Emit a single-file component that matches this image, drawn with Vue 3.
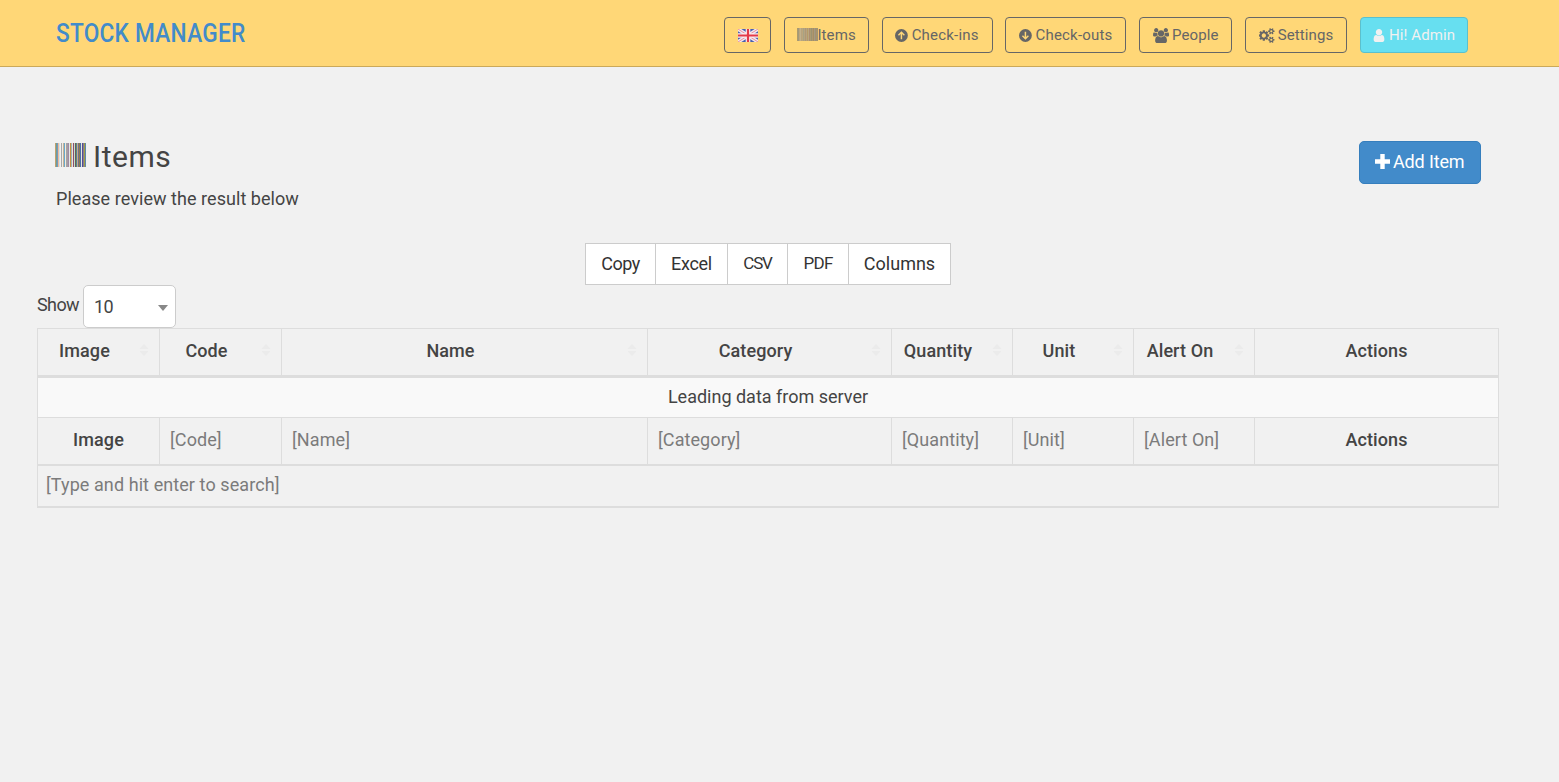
<template>
  <div class="page">
    <header class="navbar">
      <a class="brand">STOCK MANAGER</a>
      <nav class="nav-links">
        <button class="nav-btn flag-btn">
          <svg class="flag" viewBox="0 0 20 13">
            <rect width="20" height="13" fill="#4a60ac" />
            <path d="M0 0L20 13M20 0L0 13" stroke="#f3e8ee" stroke-width="3.6" />
            <path d="M0 0L20 13M20 0L0 13" stroke="#e8909c" stroke-width="1" />
            <path d="M10 0V13M0 6.5H20" stroke="#fbeef0" stroke-width="4.6" />
            <path d="M10 0V13M0 6.5H20" stroke="#e43a48" stroke-width="2.2" />
          </svg>
        </button>
        <button class="nav-btn items-btn">
          <svg class="nav-barcode" viewBox="0 0 31 24" preserveAspectRatio="none">
            <rect class="base" width="31" height="24" />
            <rect v-for="(color, i) in bars" :key="i" :x="i" y="0" width="1" height="24" :fill="color" />
          </svg>
          <span>Items</span>
        </button>
        <button v-for="link in links" :key="link.label" class="nav-btn" :class="link.name">
          <svg class="fa" :viewBox="link.box">
            <path :d="link.icon" :transform="link.flip ? 'matrix(1 0 0 -1 0 1792)' : null" />
          </svg>
          <span>{{ link.label }}</span>
        </button>
      </nav>
    </header>

    <main class="content">
      <section class="heading">
        <div>
          <h1>
            <svg class="barcode" viewBox="0 0 31 24" shape-rendering="crispEdges">
              <rect v-for="(color, i) in bars" :key="i" :x="i" y="0" width="1" height="24" :fill="color" />
            </svg>
            <span>Items</span>
          </h1>
          <p>Please review the result below</p>
        </div>
        <button class="add-btn">
          <svg viewBox="0 0 15 15"><path d="M5.3 0H9.7V5.3H15V9.7H9.7V15H5.3V9.7H0V5.3H5.3Z" /></svg>
          <span>Add Item</span>
        </button>
      </section>

      <div class="export-group">
        <button v-for="name in exportsList" :key="name" :class="name.toLowerCase()">{{ name }}</button>
      </div>

      <div class="length">
        <label>Show</label>
        <div class="select">
          <span>{{ pageSize }}</span>
          <i class="caret"></i>
        </div>
      </div>

      <table>
        <colgroup>
          <col v-for="col in columns" :key="col.label" :style="{ width: col.width + 'px' }" />
        </colgroup>
        <thead>
          <tr>
            <th v-for="col in columns" :key="col.label" :class="{ sortable: col.sortable }">
              <div class="th-inner">
                <span class="th-text">{{ col.label }}</span>
                <svg v-if="col.sortable" class="sort" viewBox="0 0 10 12">
                  <path d="M0.5 5L5 0L9.5 5ZM0.5 7H9.5L5 12Z" />
                </svg>
              </div>
            </th>
          </tr>
        </thead>
        <tbody>
          <tr>
            <td colspan="8">Leading data from server</td>
          </tr>
        </tbody>
        <tfoot>
          <tr class="filters">
            <template v-for="col in columns" :key="col.label">
              <th v-if="col.fixed">{{ col.label }}</th>
              <td v-else><input type="text" :placeholder="'[' + col.label + ']'" /></td>
            </template>
          </tr>
          <tr class="search">
            <td colspan="8"><input type="text" placeholder="[Type and hit enter to search]" /></td>
          </tr>
        </tfoot>
      </table>
    </main>
  </div>
</template>

<script setup>
import { ref } from "vue";

const pageSize = ref(10);

const exportsList = ["Copy", "Excel", "CSV", "PDF", "Columns"];

const columns = [
  { label: "Image", width: 122, sortable: true, fixed: true },
  { label: "Code", width: 122, sortable: true },
  { label: "Name", width: 366, sortable: true },
  { label: "Category", width: 244, sortable: true },
  { label: "Quantity", width: 121, sortable: true },
  { label: "Unit", width: 121, sortable: true },
  { label: "Alert On", width: 121, sortable: true },
  { label: "Actions", width: 244, fixed: true },
];

// one entry per pixel column of the barcode
const bars = [
  "#c3a06c", "#6b9f9d", "#7999b8", "#f0b99b", "#d0e4ea", "#f1f1f1",
  "#a9a9a9", "#f1ece8", "#c9b396", "#66a9d0", "#f1ebdf", "#a5a5a5",
  "#a99aa5", "#9d8da5", "#e5e5e5", "#c6903e", "#9db3c0", "#f1e3c8",
  "#8a4a78", "#c4dfcc", "#6c5f4e", "#4f8a95", "#c9a98a", "#74708a",
  "#8d7d4d", "#4a70a8", "#e8e7db", "#4f4f98", "#8f7a8c", "#9aa048",
  "#5f86ad",
];

const circleArrow =
  "M128 896a768 768 0 1 0 1536 0a768 768 0 1 0-1536 0zM896 400L1310 814L1190 934L986 730V1350H806V730L602 934L482 814z";

const users =
  "M529 896q-162 5-265 128h-134q-82 0-138-40.5t-56-118.5q0-353 124-353 6 0 43.5 21t97.5 42.5 119 21.5q67 0 133-23-5 37-5 66 0 139 81 256zm1071 637q0 120-73 189.5t-194 69.5h-874q-121 0-194-69.5t-73-189.5q0-53 3.5-103.5t14-109 26.5-108.5 43-97.5 62-81 85.5-53.5 111.5-20q10 0 43 21.5t73 48 107 48 135 21.5 135-21.5 107-48 73-48 43-21.5q61 0 111.5 20t85.5 53.5 62 81 43 97.5 26.5 108.5 14 109 3.5 103.5zm-1024-1277q0 106-75 181t-181 75-181-75-75-181 75-181 181-75 181 75 75 181zm704 384q0 159-112.5 271.5t-271.5 112.5-271.5-112.5-112.5-271.5 112.5-271.5 271.5-112.5 271.5 112.5 112.5 271.5zm576 225q0 78-56 118.5t-138 40.5h-134q-103-123-265-128 81-117 81-256 0-29-5-66 66 23 133 23 59 0 119-21.5t97.5-42.5 43.5-21q124 0 124 353zm-128-609q0 106-75 181t-181 75-181-75-75-181 75-181 181-75 181 75 75 181z";

const smallCog =
  "v140q0 16-149 31-12 27-30 52 51 113 51 138 0 4-4 7-122 71-124 71-8 0-46-47t-52-68q-20 2-30 2t-30-2q-14 21-52 68t-46 47q-2 0-124-71-4-3-4-7 0-25 51-138-18-25-30-52-149-15-149-31v-140q0-16 149-31 13-29 30-52-51-113-51-138 0-4 4-7 4-2 35-20t59-34 30-16q8 0 46 46.5t52 67.5q20-2 30-2t30 2q51-71 92-112l6-2q4 0 124 70 4 3 4 7 0 25-51 138 17 23 30 52 149 15 149 31z";

const cogs =
  "M832 896q0-106-75-181t-181-75-181 75-75 181 75 181 181 75 181-75 75-181zm768 512q0-52-38-90t-90-38-90 38-38 90q0 53 37.5 90.5t90.5 37.5 90.5-37.5 37.5-90.5zm0-1024q0-52-38-90t-90-38-90 38-38 90q0 53 37.5 90.5t90.5 37.5 90.5-37.5 37.5-90.5zm-384 421v185q0 10-7 19.5t-16 10.5l-155 24q-11 35-32 76 34 48 90 115 7 11 7 20 0 12-7 19-23 30-82.5 89.5t-78.5 59.5q-11 0-21-7l-115-90q-37 19-77 31-11 108-23 155-7 24-30 24h-186q-11 0-20-7.5t-10-17.5l-23-153q-34-10-75-31l-118 89q-7 7-20 7-11 0-21-8-144-133-144-160 0-9 7-19 10-14 41-53t47-61q-23-44-35-82l-152-24q-10-1-17-9.5t-7-19.5v-185q0-10 7-19.5t16-10.5l155-24q11-35 32-76-34-48-90-115-7-11-7-20 0-12 7-20 22-30 82-89t79-59q11 0 21 7l115 90q34-18 77-32 11-108 23-154 7-24 30-24h186q11 0 20 7.5t10 17.5l23 153q34 10 75 31l118-89q8-7 20-7 11 0 21 8 144 133 144 160 0 8-7 19-12 16-42 54t-45 60q23 48 34 82l152 23q10 2 17 10.5t7 19.5z" +
  "M1856 1338" + smallCog + "M1856 314" + smallCog;

const user =
  "M1536 1399q0 109-62.5 187t-150.5 78h-854q-88 0-150.5-78t-62.5-187q0-85 8.5-160.5t31.5-152 58.5-131 94-89 134.5-34.5q131 128 313 128t313-128q76 0 134.5 34.5t94 89 58.5 131 31.5 152 8.5 160.5zm-256-887q0 159-112.5 271.5t-271.5 112.5-271.5-112.5-112.5-271.5 112.5-271.5 271.5-112.5 271.5 112.5 112.5 271.5z";

const links = [
  { name: "checkins", label: "Check-ins", icon: circleArrow, box: "128 0 1536 1792" },
  { name: "checkouts", label: "Check-outs", icon: circleArrow, flip: true, box: "128 0 1536 1792" },
  { name: "people", label: "People", icon: users, box: "-64 0 1920 1792" },
  { name: "settings", label: "Settings", icon: cogs, box: "0 0 1920 1792" },
  { name: "admin", label: "Hi! Admin", icon: user, box: "256 0 1280 1792" },
];
</script>

<style>
body {
  margin: 0;
  background: #f1f1f1;
}
</style>

<style scoped>
.page {
  min-height: 782px;
  background: #f1f1f1;
  color: #444;
  font-family: Roboto, "Open Sans", sans-serif;
  font-size: 18px;
}

.page * {
  box-sizing: border-box;
}

button,
input {
  font: inherit;
  letter-spacing: inherit;
}

.navbar {
  display: flex;
  justify-content: space-between;
  height: 67px;
  padding: 0 91.2px 0 56px;
  background: #ffd777;
  border-bottom: 1px solid #cba95a;
}

.brand {
  color: #428bca;
  font-size: 25px;
  font-weight: 500;
  line-height: 67px;
  letter-spacing: 0.3px;
  transform: scaleX(0.905);
  transform-origin: left center;
}

.nav-links {
  display: flex;
  gap: 12.8px;
  padding-top: 17px;
}

.nav-btn {
  display: flex;
  align-items: center;
  height: 36px;
  padding: 0 0 0 12.6px;
  background: none;
  border: 1px solid #666;
  border-radius: 4px;
  color: #666;
  font-size: 15px;
  letter-spacing: 0.1px;
  white-space: nowrap;
}

.flag-btn {
  width: 47px;
}

.flag {
  width: 20px;
  height: 13px;
  margin-top: 1px;
}

.items-btn {
  width: 85px;
}

.items-btn span {
  margin-left: -1px;
}

.nav-barcode {
  width: 21px;
  height: 13px;
  margin-top: -1px;
}

.nav-barcode .base {
  fill: #b39b69;
}

.nav-barcode rect:not(.base) {
  opacity: 0.3;
}

.fa {
  height: 15px;
  margin-right: 3.6px;
  fill: currentColor;
}

.checkins {
  width: 111px;
}

.checkouts {
  width: 121px;
}

.checkins path,
.checkouts path {
  fill-rule: evenodd;
}

.checkins span,
.checkouts span {
  letter-spacing: 0.2px;
}

.people {
  width: 93px;
}

.people span,
.settings span {
  margin-left: -0.5px;
}

.settings {
  width: 102px;
}

.admin {
  width: 108px;
  background: #67dff0;
  border-color: #5bc0cd;
  color: #f1f1f1;
}

.admin .fa {
  width: 12px;
}

.content {
  padding: 74px 60px 0 37px;
}

.heading {
  display: flex;
  justify-content: space-between;
  align-items: flex-start;
  height: 102px;
  padding: 0 18px;
}

h1 {
  display: flex;
  align-items: center;
  gap: 7px;
  height: 30px;
  margin: 0;
  font-size: 30px;
  font-weight: 400;
  letter-spacing: 0.5px;
}

.barcode {
  width: 31px;
  height: 24px;
  margin-top: -2px;
}

.heading p {
  margin: 17px 0 0 1px;
  line-height: 22px;
  letter-spacing: 0.05px;
}

.add-btn {
  display: flex;
  align-items: center;
  gap: 3px;
  width: 122px;
  height: 43px;
  padding: 0 0 2px 16px;
  background: #428bca;
  border: 1px solid #357ebd;
  border-radius: 5px;
  color: #fff;
  letter-spacing: -0.15px;
}

.add-btn svg {
  width: 15px;
  height: 15px;
  margin-left: -1px;
  fill: #fff;
}

.export-group {
  display: flex;
  justify-content: center;
  height: 42px;
}

.export-group button {
  width: 61px;
  padding: 0 0 2px;
  background: #fff;
  border: 1px solid #ccc;
  border-left-width: 0;
  color: #333;
}

.export-group .copy {
  width: 71px;
  border-left-width: 1px;
  letter-spacing: -0.5px;
}

.export-group .excel {
  width: 72px;
  letter-spacing: -0.3px;
}

.export-group .csv {
  width: 60px;
  font-size: 17px;
  letter-spacing: -1.2px;
}

.export-group .pdf {
  font-size: 17px;
  letter-spacing: -0.7px;
}

.export-group .columns {
  width: 102px;
}

.length {
  display: flex;
  height: 43px;
}

.length label {
  width: 46px;
  line-height: 40px;
  letter-spacing: -0.6px;
}

.select {
  display: flex;
  justify-content: space-between;
  align-items: center;
  width: 93px;
  height: 43px;
  padding: 0 7px 0 10px;
  background: #fff;
  border: 1px solid #ccc;
  border-radius: 5px;
  letter-spacing: -0.5px;
}

.caret {
  margin-top: 3px;
  border: 5px solid transparent;
  border-top: 6px solid #888;
  border-bottom: 0;
}

table {
  width: 1462px;
  table-layout: fixed;
  border-collapse: separate;
  border-spacing: 0;
  border-top: 1px solid #ddd;
  border-left: 1px solid #ddd;
}

th,
td {
  padding: 0;
  border-right: 1px solid #ddd;
  font-weight: 400;
  text-align: center;
}

th {
  font-weight: 500;
  letter-spacing: 0.1px;
}

thead th {
  height: 49px;
  border-bottom: 3px solid #ddd;
}

.th-inner {
  display: flex;
  align-items: center;
  justify-content: center;
  margin-top: -3px;
}

.sortable .th-inner {
  padding-right: 10px;
}

.th-text {
  flex: 1;
}

.sortable .th-text {
  padding-right: 8px;
}

.sort {
  width: 10px;
  height: 12px;
  margin-top: -1px;
  fill: #ebebeb;
}

tbody td {
  height: 40px;
  padding-bottom: 2px;
  background: #f9f9f9;
  border-bottom: 1px solid #ddd;
}

.filters th,
.filters td {
  height: 48px;
  padding-bottom: 3px;
  border-bottom: 2px solid #ddd;
}

.search td {
  height: 42px;
  padding-bottom: 3px;
  border-bottom: 2px solid #ddd;
}

input {
  display: block;
  width: 100%;
  height: 30px;
  padding: 0 0 0 10px;
  background: none;
  border: 0;
  outline: 0;
  letter-spacing: 0.08px;
}

.search input {
  padding-left: 8px;
}

input::placeholder {
  color: #7b7b7b;
  opacity: 1;
}
</style>
